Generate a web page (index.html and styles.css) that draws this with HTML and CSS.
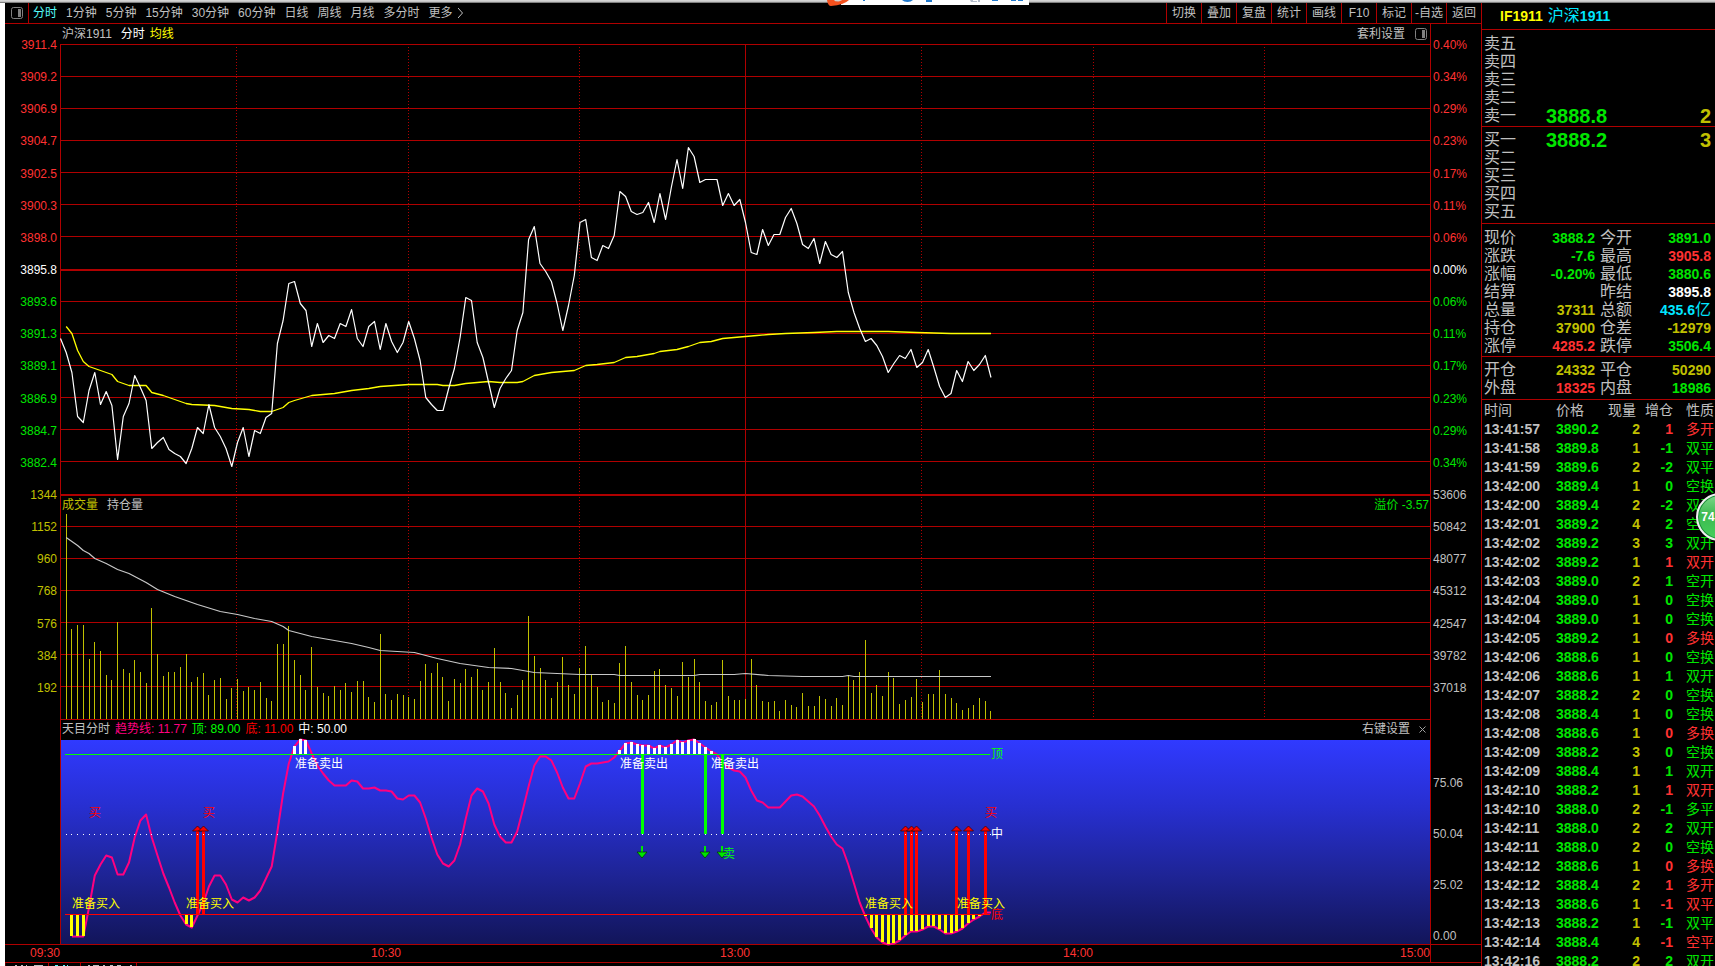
FILE: index.html
```html
<!DOCTYPE html>
<html lang="zh-CN">
<head>
<meta charset="utf-8">
<title>IF1911 沪深1911 分时</title>
<link rel="stylesheet" href="styles.css">
</head>
<body>
<div class="app">
  <div class="window-edge">
    <svg class="brand" width="204" height="6" viewBox="0 0 204 6" aria-hidden="true">
      <path d="M14 0H202V5H14z" fill="#fff"/>
      <path d="M0 0H7Q8 2 12 1.500L15 0H22Q17 5 4 6Q1 6 0 0z" fill="#f4511e"/>
      <path d="M36 0h2v1h-2zM75 0h11q-2 2-5.500 2t-5.500-2zM99 0h6v2h-6zM165 0h6v1h-6zM184 0h5v1h-5zM191 0h5v1h-5z" fill="#1f78cc"/>
      <path d="M143 0h3v1h4v1h-6zM151 0h2v2h-2z" fill="#b4bccb"/>
    </svg>
  </div>
  <div class="workspace">
    <main class="main">
      <nav class="toolbar">
        <button class="icon-btn" aria-label="侧栏"><svg width="12" height="12" viewBox="0 0 12 12"><rect x=".5" y=".5" width="11" height="11" rx="2" fill="none" stroke="#808080"/><path d="M7 2h3v8H7z" fill="#808080"/></svg></button>
        <div class="periods">
          <button class="active">分时</button><button>1分钟</button><button>5分钟</button><button>15分钟</button><button>30分钟</button><button>60分钟</button><button>日线</button><button>周线</button><button>月线</button><button>多分时</button>
          <button class="more">更多<svg width="5" height="10" viewBox="0 0 5 10"><path d="M0 0L4.500 5L0 10" fill="none" stroke="#c0c0c0"/></svg></button>
        </div>
        <div class="actions">
          <button>切换</button><button>叠加</button><button>复盘</button><button>统计</button><button>画线</button><button>F10</button><button>标记</button><button>-自选</button><button>返回</button>
        </div>
      </nav>
      <header class="chart-title">
        <span class="name">沪深1911</span><span class="white">分时</span><span class="bright">均线</span>
        <button class="push">套利设置</button>
        <button class="icon-btn" aria-label="面板"><svg width="12" height="12" viewBox="0 0 12 12"><rect x=".5" y=".5" width="11" height="11" rx="2" fill="none" stroke="#808080"/><path d="M7 2h3v8H7z" fill="#808080"/></svg></button>
      </header>
      <section class="row price">
        <ul class="axis left red">
          <li>3911.4</li><li>3909.2</li><li>3906.9</li><li>3904.7</li><li>3902.5</li><li>3900.3</li><li>3898.0</li><li class="white">3895.8</li><li class="green">3893.6</li><li class="green">3891.3</li><li class="green">3889.1</li><li class="green">3886.9</li><li class="green">3884.7</li><li class="green">3882.4</li>
        </ul>
        <div class="plot"><svg id="price" viewBox="60 44 1371 450" preserveAspectRatio="none"></svg></div>
        <ul class="axis right red">
          <li>0.40%</li><li>0.34%</li><li>0.29%</li><li>0.23%</li><li>0.17%</li><li>0.11%</li><li>0.06%</li><li class="white">0.00%</li><li class="green">0.06%</li><li class="green">0.11%</li><li class="green">0.17%</li><li class="green">0.23%</li><li class="green">0.29%</li><li class="green">0.34%</li>
        </ul>
      </section>
      <section class="row volume">
        <ul class="axis left yellow"><li>1344</li><li>1152</li><li>960</li><li>768</li><li>576</li><li>384</li><li>192</li></ul>
        <div class="plot">
          <svg id="volume" viewBox="60 494 1371 225" preserveAspectRatio="none"></svg>
          <div class="plot-head"><span class="yellow name">成交量</span><span>持仓量</span><span class="green push">溢价 -3.57</span></div>
        </div>
        <ul class="axis right"><li>53606</li><li>50842</li><li>48077</li><li>45312</li><li>42547</li><li>39782</li><li>37018</li></ul>
      </section>
      <section class="row trend">
        <div class="axis left"></div>
        <div class="plot">
          <div class="sky"></div>
          <svg id="trend" viewBox="60 719 1371 225" preserveAspectRatio="none"></svg>
          <div class="marks" id="marks"></div>
          <div class="plot-head tight"><span>天目分时</span><span class="pink">趋势线: 11.77</span><span class="lime">顶: 89.00</span><span class="pure">底: 11.00</span><span class="white">中: 50.00</span><button class="push">右键设置</button><button class="close" aria-label="关闭"><svg width="7" height="7" viewBox="0 0 7 7"><path d="M0.500 0.500L6.500 6.500M6.500 0.500L0.500 6.500" stroke="#a0a0a0"/></svg></button></div>
        </div>
        <ul class="axis right"><li>75.06</li><li>50.04</li><li>25.02</li><li>0.00</li></ul>
      </section>
      <div class="times"><span>09:30</span><div class="hours"><span>10:30</span><span>13:00</span><span>14:00</span><span>15:00</span></div></div>
      <div class="tabs">
        <svg width="140" height="3" viewBox="0 0 140 3" aria-hidden="true"><path d="M0 0v3M43.500 0v3M75.500 0v3M131.500 0v3" stroke="#b00000"/><path d="M10 2.500h2M16 2.500h2M21 2.500h1M29 2.500h9M83 2.500h2M88 2.500h6M98 2.500h2M105 2.500h3M112 2.500h4M125 2.500h2" stroke="#c0c0c0"/><path d="M50 2.500h3M58 2.500h2M62 2.500h1" stroke="#54fcfc"/></svg>
      </div>
    </main>

    <aside class="panel">
      <h1 class="symbol"><b>IF1911</b><span>沪深<b>1911</b></span></h1>
      <dl class="book sell">
        <div><dt>卖五</dt></div><div><dt>卖四</dt></div><div><dt>卖三</dt></div><div><dt>卖二</dt></div>
        <div><dt>卖一</dt><dd class="green">3888.8</dd><dd class="yellow">2</dd></div>
      </dl>
      <dl class="book buy">
        <div><dt>买一</dt><dd class="green">3888.2</dd><dd class="yellow">3</dd></div>
        <div><dt>买二</dt></div><div><dt>买三</dt></div><div><dt>买四</dt></div><div><dt>买五</dt></div>
      </dl>
      <dl class="stats">
        <div><dt>现价</dt><dd class="green">3888.2</dd></div><div><dt>今开</dt><dd class="green">3891.0</dd></div>
        <div><dt>涨跌</dt><dd class="green">-7.6</dd></div><div><dt>最高</dt><dd class="red">3905.8</dd></div>
        <div><dt>涨幅</dt><dd class="green">-0.20%</dd></div><div><dt>最低</dt><dd class="green">3880.6</dd></div>
        <div><dt>结算</dt><dd></dd></div><div><dt>昨结</dt><dd class="white">3895.8</dd></div>
        <div><dt>总量</dt><dd class="yellow">37311</dd></div><div><dt>总额</dt><dd class="cyan">435.6<span>亿</span></dd></div>
        <div><dt>持仓</dt><dd class="yellow">37900</dd></div><div><dt>仓差</dt><dd class="yellow">-12979</dd></div>
        <div><dt>涨停</dt><dd class="red">4285.2</dd></div><div><dt>跌停</dt><dd class="green">3506.4</dd></div>
      </dl>
      <dl class="stats flow">
        <div><dt>开仓</dt><dd class="yellow">24332</dd></div><div><dt>平仓</dt><dd class="yellow">50290</dd></div>
        <div><dt>外盘</dt><dd class="red">18325</dd></div><div><dt>内盘</dt><dd class="green">18986</dd></div>
      </dl>
      <table class="ticks">
        <colgroup><col class="c-time"><col class="c-price"><col class="c-vol"><col class="c-inc"><col></colgroup>
        <thead><tr><th>时间</th><th>价格</th><th>现量</th><th>增仓</th><th>性质</th></tr></thead>
        <tbody id="ticks"></tbody>
      </table>
      <button class="ball">74</button>
    </aside>
  </div>
</div>
<script src="chart.js"></script>
</body>
</html>
```
FILE: styles.css
```css
* { box-sizing: border-box; }
body {
  margin: 0;
  background: #000;
  color: #c0c0c0;
  font-family: "Liberation Sans", "Noto Sans CJK SC", sans-serif;
  font-size: 12px;
  line-height: 16px;
}
button {
  padding: 0;
  border: 0;
  background: none;
  color: inherit;
  font: inherit;
  white-space: nowrap;
}
svg { display: block; }
ul, dl, dd, h1 { margin: 0; padding: 0; list-style: none; }

.red { color: #ff3232; }
.green { color: #00e600; }
.lime { color: #00ff00; }
.pure { color: #ff0000; }
.yellow { color: #c0c000; }
.bright { color: #ffff00; }
.white { color: #fff; }
.pink { color: #ff0080; }
.cyan { color: #00e6ff; }

.app { display: flex; flex-direction: column; height: 100vh; overflow: hidden; }
.window-edge { position: relative; flex: none; height: 3px; background: linear-gradient(#d4d4d4 1px, #c4c4c4 1px, #c4c4c4 2px, #808080 2px); }
.brand { position: absolute; z-index: 2; top: 0; left: 48.2%; }
.workspace { display: flex; flex: 1; min-height: 0; }
.main { display: flex; flex-direction: column; flex: 1; min-width: 0; border-left: 5px solid #fff; }

.toolbar { display: flex; flex: none; height: 21px; border-bottom: 1px solid #b00000; line-height: 20px; }
.toolbar .icon-btn { display: flex; align-items: center; justify-content: center; width: 24px; border-right: 1px solid #b00000; }
.periods { display: flex; flex: 1; gap: 9px; padding-left: 4px; }
.periods .active { color: #54fcfc; }
.periods .more { display: flex; align-items: center; gap: 5px; }
.actions { display: flex; }
.actions button { width: 35px; border-left: 1px solid #b00000; }

.chart-title { display: flex; flex: none; align-items: center; height: 20px; padding: 0 54px 0 57px; gap: 5px; }
.name { margin-right: 4px; }
.push { margin-left: auto; }
.chart-title .icon-btn { margin-left: 5px; }

.row { display: grid; grid-template-columns: 55px minmax(0, 1fr) 50px; flex: 1 1 0; min-height: 0; }
.price { flex-grow: 2; }
.axis { display: flex; flex-direction: column; margin: -7px 0 7px; }
.axis li { flex: 1 1 0; min-height: 0; }
.left { padding-right: 3px; text-align: right; }
.right { padding-left: 2px; }
.trend .right { justify-content: space-between; margin: 0; padding-top: 56px; }
.trend .right li { flex: none; }

.plot { position: relative; min-width: 0; min-height: 0; }
.plot > svg { position: absolute; inset: 0; width: 100%; height: 100%; overflow: visible; }
.plot-head { position: relative; display: flex; align-items: center; height: 20px; padding: 0 2px; gap: 5px; }
.volume .plot-head { padding-top: 2px; }
.sky { position: absolute; inset: 21px 1px 0; background: linear-gradient(#303aff, #272fd0 33%, #1e2496 66%, #12155a); }
.close { margin: 0 3px 0 4px; }
.marks span { position: absolute; z-index: 1; transform: translateY(-50%); white-space: nowrap; line-height: 16px; }

.times { display: flex; flex: none; height: 18px; padding-right: 50px; border-top: 1px solid #b00000; color: #ff3232; line-height: 16px; }
.times > span { width: 55px; text-align: right; }
.hours { display: grid; flex: 1; grid-template-columns: 341fr 349fr 343fr 337fr; border-right: 1px solid #b00000; text-align: right; }
.tabs { flex: none; height: 4px; border-top: 1px solid #b00000; overflow: hidden; }

.panel { position: relative; flex: none; width: 234px; border-left: 1px solid #b00000; }
.symbol { display: flex; gap: 5px; height: 27px; padding-left: 18px; border-bottom: 1px solid #b00000; font-size: 14px; font-weight: 400; line-height: 26px; color: #ffff00; }
.symbol span { color: #00e6ff; font-size: 16px; }
.symbol span b { font-size: 14px; }
.book, .stats { padding: 5px 4px 1px 2px; border-bottom: 1px solid #b00000; font-size: 16px; line-height: 18px; }
.book > div { display: grid; grid-template-columns: 62px 1fr auto; height: 18px; }
.book dd { font-size: 20px; font-weight: 700; }
.buy, .flow { padding-top: 4px; padding-bottom: 2px; }
.stats { display: grid; grid-template-columns: 1fr 1fr; column-gap: 5px; }
.stats > div { display: flex; justify-content: space-between; height: 18px; }
.stats dd { font-size: 14px; font-weight: 700; }
.stats dd span { font-size: 16px; font-weight: 400; }

.ticks { width: 100%; table-layout: fixed; border-collapse: collapse; font-size: 14px; line-height: 19px; }
.ticks th, .ticks td { height: 19px; padding: 0; text-align: right; white-space: nowrap; }
.ticks th { height: 20px; font-weight: 400; }
.ticks td { font-weight: 700; }
.ticks th:first-child, .ticks td:first-child { padding-left: 2px; text-align: left; }
.ticks th:nth-child(2), .ticks td:nth-child(2) { text-align: left; }
.ticks th:nth-child(3) { padding-right: 4px; }
.ticks th:last-child, .ticks td:last-child { padding-right: 1px; font-weight: 400; }
.c-time { width: 74px; }
.c-price { width: 46px; }
.c-vol { width: 38px; }
.c-inc { width: 33px; }

.ball { position: absolute; top: 490px; right: -29px; width: 48px; height: 48px; padding-right: 24px; border: 2px solid #f0f0f0; border-radius: 50%; background: linear-gradient(#7fd88a, #3cba50 45%, #45cf5c); box-shadow: inset 0 0 0 1px #1d8a3a; color: #fff; font-size: 12px; font-weight: 700; }
```
FILE: chart.js
```js
const LEFT = 60.5, STEP = 1370 / 240;
const x = i => LEFT + STEP * i;
const px = i => Math.round(60 + STEP * i);

const price = [338,352,372,416,422,390,372,404,391,405,459,416,403,375,387,400,448,442,437,449,453,456,463,448,427,433,404,427,436,448,466,442,427,456,430,433,417,413,343,320,283,281,303,310,346,323,342,335,338,323,326,309,338,346,326,321,349,323,341,352,342,321,338,360,397,404,410,410,388,368,337,297,300,342,357,382,407,388,378,370,330,312,239,226,263,271,281,303,330,305,275,222,219,257,260,245,248,235,191,196,211,214,212,202,222,193,219,187,159,188,147,156,182,179,179,179,205,193,205,199,222,252,254,229,245,234,234,217,208,223,244,248,238,263,241,254,257,251,292,312,328,341,338,345,356,372,363,355,358,349,367,362,349,367,386,397,393,370,381,361,370,364,355,377];

const average = [[1,326],[2,333],[3,350],[4,361],[5,366],[6,368],[7,370],[8,372],[9,374],[10,381],[12,385],[15,385],[16,392],[18,395],[20,399],[22,403],[23,404],[27,405],[30,408],[33,409],[35,411],[37,411],[39,407],[40,402],[41,400],[44,395],[48,393],[51,390],[54,388],[56,386],[61,384],[66,384],[67,385],[69,385],[71,383],[75,381],[77,382],[80,382],[81,381],[83,375],[86,372],[90,370],[92,365],[94,364],[97,362],[99,357],[101,356],[104,353],[105,351],[108,349],[110,346],[112,342],[114,341],[116,338],[120,336],[122,335],[124,334],[127,333],[132,332],[136,331],[145,331],[150,332],[156,333],[163,333]];

const holding = [[1,537],[2,541],[3,545],[4,550],[5,553],[6,558],[8,563],[10,569],[12,573],[15,582],[17,589],[20,596],[24,604],[28,611],[31,614],[34,618],[37,621],[39,626],[40,630],[44,636],[48,640],[51,643],[54,647],[56,650],[62,652],[66,658],[70,663],[75,667],[79,668],[83,672],[91,674],[97,674],[98,675],[111,675],[112,674],[118,674],[120,673],[124,675],[130,676],[137,676],[138,675],[139,676],[163,676]];

const volumeTop = [514,629,625,625,659,642,651,675,680,622,669,673,660,672,683,608,654,676,672,672,667,654,682,677,673,695,680,678,699,688,679,691,687,690,682,698,701,644,644,626,660,675,690,647,687,693,696,686,690,683,692,681,681,697,702,634,694,700,694,695,697,699,681,664,673,663,677,701,679,683,669,677,669,690,682,648,682,693,708,695,680,616,656,668,680,698,682,657,685,694,668,646,674,687,702,700,703,663,646,682,695,700,695,671,669,685,688,696,662,677,659,682,701,705,702,660,696,700,700,699,659,685,701,702,701,711,700,705,707,693,706,706,696,699,706,698,705,675,680,672,640,693,685,696,672,678,704,700,697,679,702,694,694,670,694,698,703,710,708,705,698,701,711];

/* trend values, one per minute starting at minute 2 */
const trend = [936,936,936,907,875,864,855,857,874,874,862,837,820,814,837,855,873,887,902,915,924,927,915,903,886,875,875,884,899,902,897,900,897,890,878,866,831,793,763,746,739,740,753,765,773,780,785,785,785,780,781,788,788,787,790,790,791,798,799,795,795,802,818,837,854,863,866,860,844,818,795,788,791,803,824,836,842,842,831,809,786,765,756,756,760,772,787,798,798,783,766,763,763,762,761,757,750,743,742,744,745,745,748,745,747,744,740,742,740,739,743,747,751,754,762,767,770,771,777,790,800,802,807,807,807,801,795,794,796,801,806,815,826,836,844,848,864,883,902,916,928,937,942,944,943,940,935,931,931,929,926,926,929,933,933,931,928,923,919,916,912,912];

const rect = (l, t, w, h, fill) => `<rect x="${l}" y="${t}" width="${w}" height="${h}" fill="${fill}" shape-rendering="crispEdges"/>`;
const line = (pts, color, width) => `<polyline points="${pts.map(p => p[0].toFixed(1) + ',' + (p[1] + 0.5)).join(' ')}" fill="none" stroke="${color}" stroke-width="${width}" stroke-linejoin="round"/>`;
const RED = '#b00000';

function grid(rows, top, bottom) {
  let s = rows.map(y => rect(60, y, 1371, 1, RED)).join('');
  for (const v of [236, 408, 579, 921, 1093, 1264])
    s += `<path d="M${v}.5 ${top + 3}V${bottom}" stroke="${RED}" stroke-dasharray="1 2" shape-rendering="crispEdges"/>`;
  return s + rect(745, top, 1, bottom - top, RED) + rect(60, top, 1, bottom - top, RED) + rect(1430, top === 44 ? 24 : top, 1, bottom - top + (top === 44 ? 20 : 0), RED);
}

document.getElementById('price').innerHTML =
  grid([44,76,108,140,172,204,236,269,270,301,333,365,397,429,461], 44, 494) +
  line(average.map(([i, y]) => [x(i), y]), '#ffff00', 1.3) +
  line(price.map((y, i) => [x(i), y]), '#ffffff', 1.2);

document.getElementById('volume').innerHTML =
  grid([494,495,526,558,590,622,654,686], 494, 719) +
  volumeTop.map((y, k) => rect(px(k + 1), y, 1, 719 - y, '#c0c000')).join('') +
  line(holding.map(([i, y]) => [x(i), y]), '#c8c8c8', 1.2);

const TOP = 754, MID = 834, LOW = 914;
let t = rect(60, 719, 1371, 1, RED) + rect(60, 719, 1, 225, RED) + rect(1430, 719, 1, 225, RED);
t += line(trend.map((y, k) => [x(k + 2), y]), '#ff0080', 2);
trend.forEach((y, k) => {
  const l = px(k + 2) - 1;
  if (y < TOP - 1) t += rect(l, y, 3, TOP - y, '#ffffff');
  if (y > LOW + 1) t += rect(l, LOW, 3, y - LOW, '#ffff00');
});
t += rect(65, TOP, 925, 1, '#00ff00') + rect(65, LOW, 925, 1, '#ff0000');
for (const i of [24, 25, 148, 149, 150, 157, 159, 162]) {
  const c = px(i);
  t += rect(c - 1, 831, 3, LOW - 831, '#ff0000') +
    `<path d="M${c + .5} 826L${c + 5.5} 831H${c - 4.5}z" fill="#ff0000" stroke="#300000" stroke-width=".7"/>`;
}
for (const i of [102, 113, 116]) {
  const c = px(i);
  t += rect(c - 1, TOP, 3, MID - TOP, '#00ff00') + rect(c - 1, 846, 2, 7, '#00e600') +
    `<path d="M${c} 858L${c + 5} 852H${c - 5}z" fill="#00e600" stroke="#003000" stroke-width=".7"/>`;
}
for (let i = 1; i <= 163; i++) t += rect(px(i), MID, 1, 1, '#ffffff');
document.getElementById('trend').innerHTML = t;

const marks = [
  ['买',89,813,'pure'],['买',203,813,'pure'],['买',985,813,'pure'],
  ['准备买入',72,904,'bright'],['准备买入',186,904,'bright'],['准备买入',865,904,'bright'],['准备买入',957,904,'bright'],
  ['准备卖出',295,764,'white'],['准备卖出',620,764,'white'],['准备卖出',711,764,'white'],
  ['卖',723,854,'lime'],['顶',991,754,'lime'],['中',991,834,'white'],['底',991,915,'pure']
];
document.getElementById('marks').innerHTML = marks.map(([s, l, y, c]) =>
  `<span class="${c}" style="left:${((l - 60) / 13.71).toFixed(2)}%;top:${((y - 719) / 2.25).toFixed(2)}%">${s}</span>`).join('');

/* time, price, volume, change in holding, kind, colour */
const ticks = `57 3890.2 2 1 多开 r
58 3889.8 1 -1 双平 g
59 3889.6 2 -2 双平 g
00 3889.4 1 0 空换 g
00 3889.4 2 -2 双平 g
01 3889.2 4 2 空开 g
02 3889.2 3 3 双开 g
02 3889.2 1 1 双开 r
03 3889.0 2 1 空开 g
04 3889.0 1 0 空换 g
04 3889.0 1 0 空换 g
05 3889.2 1 0 多换 r
06 3888.6 1 0 空换 g
06 3888.6 1 1 双开 g
07 3888.2 2 0 空换 g
08 3888.4 1 0 空换 g
08 3888.6 1 0 多换 r
09 3888.2 3 0 空换 g
09 3888.4 1 1 双开 g
10 3888.2 1 1 双开 r
10 3888.0 2 -1 多平 g
11 3888.0 2 2 双开 g
11 3888.0 2 0 空换 g
12 3888.6 1 0 多换 r
12 3888.4 2 1 多开 r
13 3888.6 1 -1 双平 r
13 3888.2 1 -1 双平 g
14 3888.4 4 -1 空平 r
16 3888.2 2 2 双开 g`.split('\n').map(r => r.split(' '));
document.getElementById('ticks').innerHTML = ticks.map(([s, p, v, d, k, c]) => {
  const tone = c === 'r' ? 'red' : 'green';
  return `<tr><td>13:${s > 30 ? 41 : 42}:${s}</td><td class="green">${p}</td><td class="yellow">${v}</td><td class="${tone}">${d}</td><td class="${tone}">${k}</td></tr>`;
}).join('');
```
